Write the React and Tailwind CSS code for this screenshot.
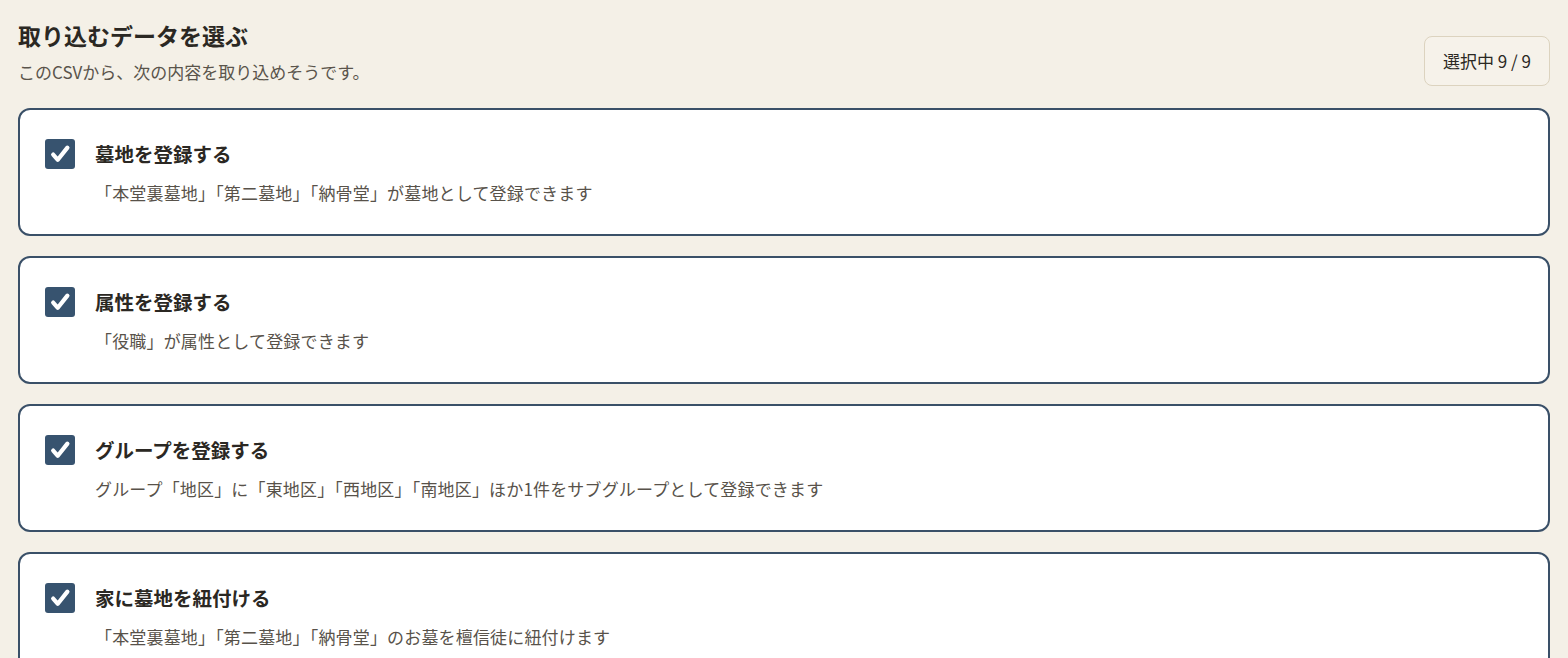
const ITEMS = [
  {
    title: "墓地を登録する",
    desc: "「本堂裏墓地」「第二墓地」「納骨堂」が墓地として登録できます",
  },
  {
    title: "属性を登録する",
    desc: "「役職」が属性として登録できます",
  },
  {
    title: "グループを登録する",
    desc: "グループ「地区」に「東地区」「西地区」「南地区」ほか1件をサブグループとして登録できます",
  },
  {
    title: "家に墓地を紐付ける",
    desc: "「本堂裏墓地」「第二墓地」「納骨堂」のお墓を檀信徒に紐付けます",
  },
];

function Check() {
  return (
    <div className="flex h-[30px] w-[30px] shrink-0 items-center justify-center rounded-[3px] bg-[#37536f]">
      <svg className="h-[30px] w-[30px]" viewBox="0 0 30 30" fill="none" stroke="white" strokeWidth="4.2" strokeLinecap="round" strokeLinejoin="round">
        <path d="M8.2 15.6l4.6 5.2L22.4 8.6" />
      </svg>
    </div>
  );
}

export default function App() {
  return (
    <div
      className="min-h-screen bg-[#f4f0e7] px-[18px] pt-[19px] pb-10 text-[#2b2823]"
      style={{ fontFamily: '"Noto Sans CJK JP", "Noto Sans", sans-serif' }}
    >
      {/* Header */}
      <div className="mb-[22px] flex items-start justify-between">
        <div>
          <h1 className="text-[23px] font-bold leading-[32px]">取り込むデータを選ぶ</h1>
          <p className="mt-[7px] text-[17px] leading-[28px] text-[#5a544b]">このCSVから、次の内容を取り込めそうです。</p>
        </div>
        <div className="mt-[17px] flex h-[50px] items-center rounded-lg border border-[#dcd3bf] bg-[#f6f2ea] px-[18px] text-[17px]">
          選択中 9 / 9
        </div>
      </div>

      {/* Items */}
      <div className="flex flex-col gap-[20px]">
        {ITEMS.map((item) => (
          <div key={item.title} className="rounded-[12px] border-2 border-[#3a5068] bg-white px-[25px] py-[29px]">
            <div className="flex items-center gap-[20px]">
              <Check />
              <p className="text-[19.5px] font-bold leading-[30px]">{item.title}</p>
            </div>
            <p className="ml-[50px] mt-[11px] text-[17px] leading-[25px] tracking-[0.01em] text-[#58524a]">{item.desc}</p>
          </div>
        ))}
      </div>
    </div>
  );
}
